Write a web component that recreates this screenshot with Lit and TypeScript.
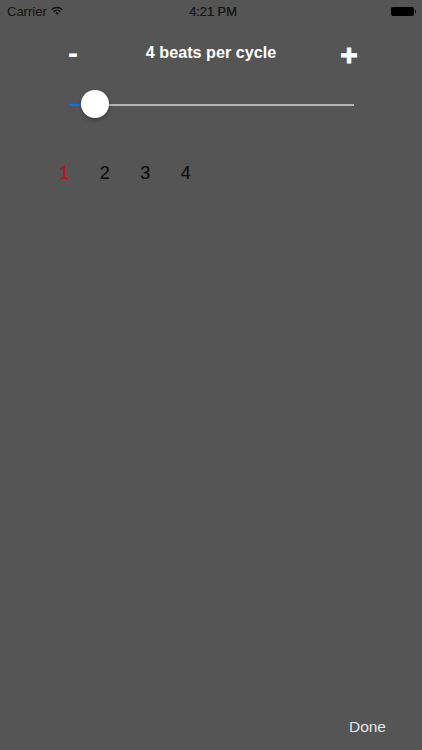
import { LitElement, html, css } from "lit";
import { customElement } from "lit/decorators.js";

@customElement("app-root")
export class AppRoot extends LitElement {
  static styles = css`
    :host {
      display: flex;
      flex-direction: column;
      width: 422px;
      height: 750px;
      background: #555555;
      font-family: "Liberation Sans", Arial, sans-serif;
      overflow: hidden;
      position: relative;
    }
    .status {
      height: 22px;
      display: grid;
      grid-template-columns: 1fr auto 1fr;
      align-items: center;
      padding: 0 6px 0 7px;
      color: #111;
      font-size: 13px;
    }
    .left {
      display: flex;
      align-items: center;
      gap: 4px;
    }
    .wifi {
      margin-top: -1px;
    }
    .time {
      margin-left: 3px;
      font-size: 12.8px;
      -webkit-text-stroke: 0.2px #111;
    }
    .right {
      display: flex;
      justify-content: flex-end;
      align-items: center;
    }
    .batt {
      width: 23px;
      height: 9px;
      background: #000;
      border-radius: 2px;
    }
    .nub {
      width: 1.5px;
      height: 3px;
      background: #000;
      margin-left: 1px;
    }
    .header {
      display: grid;
      grid-template-columns: 30px 1fr 30px;
      align-items: center;
      margin: 18px 59px 0 59px;
      height: 26px;
      color: #fff;
      font-weight: 700;
      text-align: center;
    }
    .title {
      font-size: 16.2px;
      transform: translateY(-1px);
    }
    .minus {
      font-size: 30px;
      line-height: 26px;
      transform: translate(-1px, 0);
    }
    .plus {
      font-size: 30px;
      line-height: 26px;
      transform: translate(1px, 2px);
      -webkit-text-stroke: 0.9px #fff;
    }
    .slider {
      margin: 24px 68px 0 69px;
      height: 28px;
      padding-top: 2px;
      box-sizing: border-box;
      display: flex;
      align-items: center;
      position: relative;
    }
    .fill {
      width: 26px;
      height: 2px;
      background: #0f70e8;
    }
    .track {
      flex: 1;
      height: 2px;
      background: #b4b4b4;
    }
    .thumb {
      position: absolute;
      left: 12px;
      top: 0;
      width: 28px;
      height: 28px;
      border-radius: 50%;
      background: #fff;
      box-shadow: 0 2px 4px rgba(0, 0, 0, 0.3);
    }
    .beats {
      display: flex;
      margin: 43px 0 0 44px;
      font-size: 18px;
      color: #0d0d0d;
      -webkit-text-stroke: 0.15px #0d0d0d;
    }
    .beats span {
      width: 40.5px;
      text-align: center;
      line-height: 24px;
    }
    .beats .on {
      color: #b5171d;
      -webkit-text-stroke: 0.4px #b5171d;
    }
    .spacer {
      flex: 1;
    }
    .done {
      align-self: flex-end;
      margin: 0 36px 13px 0;
      font-size: 15.5px;
      line-height: 20px;
      color: #dfe6ee;
    }
  `;

  render() {
    return html`
      <div class="status">
        <div class="left">
          <span>Carrier</span>
          <svg class="wifi" width="12" height="9" viewBox="0 0 14 10">
            <path d="M0.3 3.4A9.6 9.6 0 0 1 13.7 3.4L12.6 4.6A8 8 0 0 0 1.4 4.6Z" fill="#111" />
            <path d="M2.6 5.7A6.4 6.4 0 0 1 11.4 5.7L10.2 6.9A4.7 4.7 0 0 0 3.8 6.9Z" fill="#111" />
            <path d="M4.9 8A3 3 0 0 1 9.1 8L7 10Z" fill="#111" />
          </svg>
        </div>
        <span class="time">4:21 PM</span>
        <div class="right"><div class="batt"></div><div class="nub"></div></div>
      </div>
      <div class="header">
        <span class="minus">-</span>
        <span class="title">4 beats per cycle</span>
        <span class="plus">+</span>
      </div>
      <div class="slider">
        <div class="fill"></div>
        <div class="track"></div>
        <div class="thumb"></div>
      </div>
      <div class="beats">
        <span class="on">1</span><span>2</span><span>3</span><span>4</span>
      </div>
      <div class="spacer"></div>
      <div class="done">Done</div>
    `;
  }
}
